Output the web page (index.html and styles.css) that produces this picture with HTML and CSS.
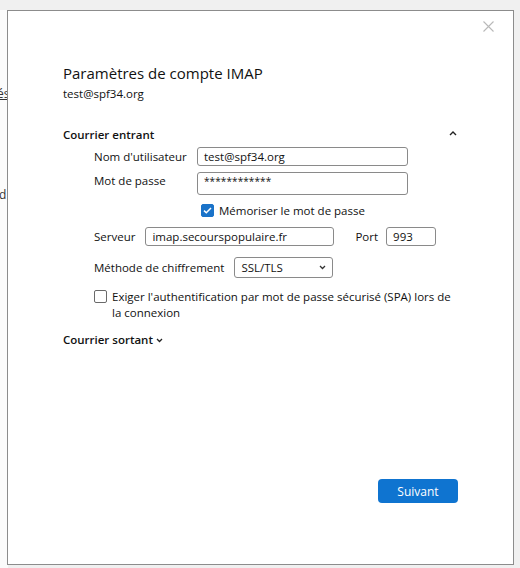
FILE: index.html
```html
<!DOCTYPE html>
<html lang="fr">
<head>
<meta charset="utf-8">
<title>Paramètres de compte IMAP</title>
<link rel="stylesheet" href="styles.css">
</head>
<body>
<div class="backdrop">
  <span class="bg-text bg-1">és</span>
  <span class="bg-text bg-2">d</span>
</div>
<div class="dialog">
  <button class="close" aria-label="Fermer">
    <svg width="11" height="11" viewBox="0 0 11 11"><path d="M0.5 0.5 L10.5 10.5 M10.5 0.5 L0.5 10.5" stroke="#b9b9b9" stroke-width="1.1" fill="none"/></svg>
  </button>
  <h1 class="title">Paramètres de compte IMAP</h1>
  <div class="account">test@spf34.org</div>

  <div class="section-head">
    <span class="section-title">Courrier entrant</span>
    <svg class="caret-up" width="8" height="5" viewBox="0 0 8 5"><path d="M1 4 L4 1 L7 4" stroke="#222" stroke-width="1.4" fill="none"/></svg>
  </div>

  <div class="fields">
    <div class="row row-user">
      <label class="lbl lbl-wide">Nom d'utilisateur</label>
      <div class="input input-user">test@spf34.org</div>
    </div>
    <div class="row row-pass">
      <label class="lbl lbl-wide">Mot de passe</label>
      <div class="input input-pass">************</div>
    </div>
    <div class="row row-remember">
      <span class="check checked">
        <svg width="9" height="7" viewBox="0 0 9 7"><path d="M1 3.6 L3.3 5.8 L8 1" stroke="#fff" stroke-width="1.5" fill="none"/></svg>
      </span>
      <span class="check-label">Mémoriser le mot de passe</span>
    </div>
    <div class="row row-server">
      <label class="lbl">Serveur</label>
      <div class="input input-server">imap.secourspopulaire.fr</div>
      <label class="lbl lbl-port">Port</label>
      <div class="input input-port">993</div>
    </div>
    <div class="row row-crypt">
      <label class="lbl">Méthode de chiffrement</label>
      <div class="input select">
        <span>SSL/TLS</span>
        <svg width="7" height="5" viewBox="0 0 7 5"><path d="M1 1 L3.5 3.5 L6 1" stroke="#333" stroke-width="1.3" fill="none"/></svg>
      </div>
    </div>
    <div class="row row-spa">
      <span class="check"></span>
      <span class="spa-label">Exiger l'authentification par mot de passe sécurisé (SPA) lors de la connexion</span>
    </div>
  </div>

  <div class="section-head section-out">
    <span class="section-title">Courrier sortant</span>
    <svg class="caret-down" width="7" height="5" viewBox="0 0 7 5"><path d="M1 1 L3.5 3.5 L6 1" stroke="#222" stroke-width="1.3" fill="none"/></svg>
  </div>

  <div class="actions">
    <button class="primary">Suivant</button>
  </div>
</div>
</body>
</html>
```

FILE: styles.css
```css
* { box-sizing: border-box; }
html, body { margin: 0; padding: 0; }
body {
  width: 520px;
  height: 568px;
  background: #f0f0f0;
  font-family: "Open Sans", "Noto Sans", sans-serif;
  font-size: 12px;
  color: #111;
  position: relative;
  overflow: hidden;
}
.backdrop {
  position: absolute;
  left: 0;
  top: 10px;
  width: 8px;
  height: 558px;
  background: #fbfbfb;
  overflow: hidden;
}
.bg-text {
  position: absolute;
  left: -3px;
  font-size: 12px;
  color: #333;
}
.bg-1 { top: 75px; text-decoration: underline; }
.bg-2 { top: 176px; left: -1px; }

.dialog {
  position: absolute;
  left: 7px;
  top: 10px;
  width: 507px;
  height: 555px;
  background: #fff;
  border: 1px solid #8c8c8c;
  padding: 52px 40px 0 55px;
  display: flex;
  flex-direction: column;
}
.close {
  position: absolute;
  right: 18px;
  top: 9px;
  width: 13px;
  height: 13px;
  border: 0;
  padding: 1px;
  background: transparent;
  display: flex;
}
.title {
  margin: 0;
  font-size: 15px;
  font-weight: 400;
  line-height: 20px;
  color: #111;
}
.account {
  margin-top: 2px;
  line-height: 18px;
  font-size: 11.5px;
}
.section-head {
  margin-top: 23px;
  display: flex;
  align-items: center;
  justify-content: space-between;
  line-height: 18px;
  padding-right: 16px;
}
.section-title {
  font-weight: 600;
  font-size: 11.5px;
}
.caret-up { margin-top: -3px; }
.fields {
  padding-left: 31px;
  display: flex;
  flex-direction: column;
}
.row {
  display: flex;
  align-items: center;
}
.lbl {
  font-size: 11.5px;
  white-space: nowrap;
}
.lbl-wide { width: 103px; flex: none; }
.input {
  height: 19px;
  border: 1px solid #8a8a8a;
  border-radius: 3px;
  padding: 0 6px;
  display: flex;
  align-items: center;
  font-size: 11.5px;
  color: #111;
  background: #fff;
}
.row-user { margin-top: 3px; }
.input-user { width: 211px; }
.row-pass { margin-top: 6px; align-items: flex-start; }
.row-pass .lbl { line-height: 17px; }
.input-pass { width: 211px; height: 23px; align-items: flex-start; padding-top: 1px; font-size: 10px; letter-spacing: 0.1px; }
.row-remember { margin-top: 8px; padding-left: 107px; }
.check {
  width: 13px;
  height: 13px;
  border: 1px solid #6a6a6a;
  border-radius: 2px;
  display: inline-flex;
  align-items: center;
  justify-content: center;
  flex: none;
}
.check.checked { background: #1a73c9; border-color: #1a73c9; }
.check-label { margin-left: 5px; font-size: 11.5px; }
.row-server { margin-top: 9px; }
.input-server { width: 189px; margin-left: 10px; }
.lbl-port { margin-left: 21px; }
.input-port { width: 50px; margin-left: 8px; }
.row-crypt { margin-top: 11px; }
.select {
  width: 99px;
  height: 21px;
  margin-left: 10px;
  justify-content: space-between;
  padding-right: 6px;
}
.row-spa { margin-top: 11px; align-items: flex-start; }
.row-spa .check { margin-top: 1px; }
.spa-label {
  margin-left: 5px;
  width: 345px;
  line-height: 16px;
  font-size: 11.5px;
}
.section-out {
  margin-top: 10px;
  justify-content: flex-start;
}
.caret-down { margin-left: 3px; margin-top: 1px; }
.actions {
  margin-top: auto;
  margin-bottom: 61px;
  display: flex;
  justify-content: flex-end;
  padding-right: 15px;
}
.primary {
  width: 80px;
  height: 24px;
  border: 0;
  border-radius: 4px;
  background: #0f74d0;
  color: #fff;
  font-family: inherit;
  font-size: 12px;
}
```
